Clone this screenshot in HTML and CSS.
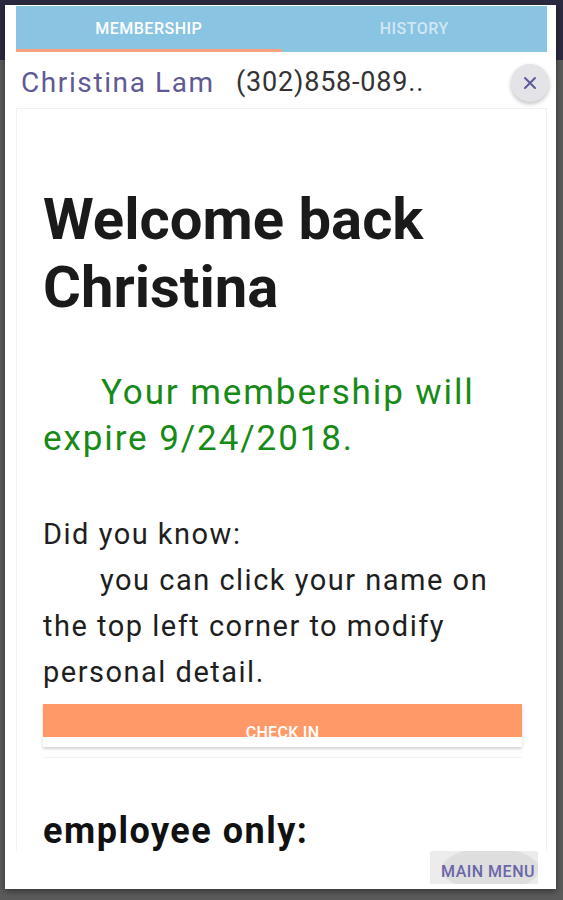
FILE: index.html
```html
<!DOCTYPE html>
<html>
<head>
<meta charset="utf-8">
<link rel="stylesheet" href="styles.css">
</head>
<body>
<div class="dialog">
  <div class="tabs">
    <div class="tab active">MEMBERSHIP</div>
    <div class="tab">HISTORY</div>
  </div>
  <div class="header">
    <span class="name">Christina Lam</span>
    <span class="phone">(302)858-089..</span>
    <button class="close" aria-label="close">
      <svg width="14" height="14" viewBox="0 0 14 14"><path d="M2 2L12 12M12 2L2 12" stroke="#5d5a9a" stroke-width="2" stroke-linecap="round"/></svg>
    </button>
  </div>
  <div class="card">
    <h1 class="welcome">Welcome back Christina</h1>
    <p class="expire">Your membership will expire 9/24/2018.</p>
    <p class="tip">Did you know:<br><span class="indent">you can click your name on the top left corner to modify personal detail.</span></p>
    <div class="checkin">CHECK IN</div>
    <div class="sep"></div>
    <h2 class="employee">employee only:</h2>
  </div>
  <div class="footer">
    <button class="mainmenu">MAIN MENU</button>
  </div>
</div>
</body>
</html>
```

FILE: styles.css
```css
html, body {
  margin: 0;
  padding: 0;
}
body {
  width: 563px;
  height: 900px;
  background: linear-gradient(#2c2a40 0, #2c2a40 60px, #5a5a5a 60px);
  font-family: Roboto, "Noto Sans", sans-serif;
  overflow: hidden;
}
.dialog {
  position: relative;
  margin: 5px 0 0 5px;
  width: 551px;
  height: 884px;
  background: #fff;
  box-shadow: 0 2px 6px rgba(0,0,0,0.45);
  display: flex;
  flex-direction: column;
  padding: 1px 9px 0 11px;
  box-sizing: border-box;
}
.tabs {
  display: flex;
  height: 46px;
  background: #89c4e2;
  flex: none;
}
.tab {
  flex: 1;
  display: flex;
  align-items: center;
  justify-content: center;
  font-size: 16px;
  letter-spacing: 0.5px;
  font-weight: 500;
  color: rgba(255,255,255,0.62);
  padding-bottom: 1px;
  box-sizing: border-box;
}
.tab.active {
  color: #fff;
  border-bottom: 3px solid #f7a07e;
  padding-bottom: 0;
  padding-top: 2px;
}
.header {
  position: relative;
  height: 56px;
  flex: none;
  display: flex;
  align-items: center;
  padding: 4px 0 0 5px;
  box-sizing: border-box;
  white-space: nowrap;
}
.name {
  font-size: 28px;
  letter-spacing: 1.6px;
  color: #5f5a96;
  width: 215px;
}
.phone {
  font-size: 27px;
  letter-spacing: 0.8px;
  color: #333;
}
.close {
  position: absolute;
  right: -2px;
  top: 12px;
  width: 38px;
  height: 38px;
  border-radius: 50%;
  border: none;
  background: #e4e4e8;
  box-shadow: 0 2px 4px rgba(0,0,0,0.25);
  display: flex;
  align-items: center;
  justify-content: center;
  padding: 0;
}
.card {
  flex: 1;
  border: 1px solid #f0f0f0;
  border-bottom: none;
  padding: 0 24px 0 26px;
  box-sizing: border-box;
}
.welcome {
  margin: 76px 0 0;
  font-size: 58px;
  line-height: 68px;
  font-weight: 700;
  color: #1a1a1a;
}
.expire {
  margin: 49px 0 0;
  font-size: 35px;
  line-height: 46px;
  letter-spacing: 1.9px;
  color: #178a17;
  text-indent: 58px;
}
.tip {
  margin: 49px 0 0;
  font-size: 29px;
  line-height: 46px;
  letter-spacing: 1.5px;
  color: #1e1e1e;
}
.indent {
  padding-left: 57px;
}
.checkin {
  margin-top: 9px;
  height: 43px;
  background: linear-gradient(#ff9a68 0, #ff9a68 33px, #fff 33px);
  box-shadow: 0 2px 3px rgba(0,0,0,0.18);
  color: #fff;
  font-size: 16px;
  letter-spacing: 0.3px;
  font-weight: 500;
  text-align: center;
  line-height: 18px;
  padding-top: 20px;
  box-sizing: border-box;
}
.sep {
  margin-top: 10px;
  height: 1px;
  background: #f2f2f2;
}
.employee {
  margin: 53px 0 0;
  font-size: 36px;
  line-height: 40px;
  letter-spacing: 1.5px;
  font-weight: 700;
  color: #111;
}
.footer {
  height: 38px;
  flex: none;
  display: flex;
  justify-content: flex-end;
  align-items: flex-start;
  padding: 0 9px 0 0;
  box-sizing: border-box;
}
.mainmenu {
  width: 108px;
  height: 33px;
  border: none;
  border-radius: 2px;
  background: radial-gradient(ellipse 50px 22px at 56% 55%, #dedede 0, #dedede 95%, #ececec 100%);
  color: #6a66a8;
  font-family: Roboto, sans-serif;
  font-size: 16px;
  letter-spacing: 0.5px;
  font-weight: 500;
  padding: 8px 0 0 11px;
  text-align: left;
  white-space: nowrap;
}
```
